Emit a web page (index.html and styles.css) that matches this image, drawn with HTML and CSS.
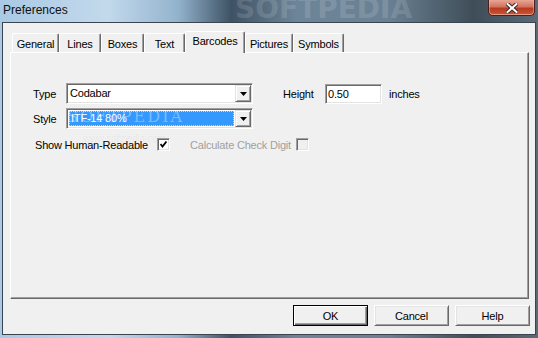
FILE: index.html
```html
<!DOCTYPE html>
<html lang="en">

<head>
    <meta charset="UTF-8">
    <title>Preferences</title>
    <link rel="stylesheet" href="styles.css">
</head>

<body>
    <div class="titlebar">
        <span class="title">Preferences</span>
        <span class="watermark">SOFTPEDIA</span>
        <button class="close" aria-label="Close">
            <svg width="12" height="10" viewBox="0 0 12 10">
                <path d="M1.5 1 L10.5 9 M10.5 1 L1.5 9" stroke="#3a2a2a" stroke-width="4" stroke-linecap="square" />
                <path d="M1.5 1 L10.5 9 M10.5 1 L1.5 9" stroke="#fff" stroke-width="2" stroke-linecap="square" />
            </svg>
        </button>
    </div>

    <div class="window">
        <div class="tabs">
            <div class="tab" style="width:47px">General</div>
            <div class="tab" style="width:42px">Lines</div>
            <div class="tab" style="width:43px">Boxes</div>
            <div class="tab" style="width:41px">Text</div>
            <div class="tab active" style="width:60px">Barcodes</div>
            <div class="tab" style="width:48px">Pictures</div>
            <div class="tab" style="width:51px">Symbols</div>
        </div>

        <div class="panel">
            <div class="row">
                <span class="label">Type</span>
                <div class="combo">
                    <span class="value">Codabar</span>
                    <span class="drop">
                        <svg width="7" height="4" viewBox="0 0 7 4"><polygon points="0,0 7,0 3.5,4" fill="#000" /></svg>
                    </span>
                </div>
                <span class="label height-label">Height</span>
                <div class="input">0.50</div>
                <span class="unit">inches</span>
            </div>

            <div class="row">
                <span class="label">Style</span>
                <div class="combo">
                    <span class="value selected">ITF-14 80%</span>
                    <span class="drop">
                        <svg width="7" height="4" viewBox="0 0 7 4"><polygon points="0,0 7,0 3.5,4" fill="#000" /></svg>
                    </span>
                </div>
            </div>

            <div class="check-row">
                <span class="check-label">Show Human-Readable</span>
                <span class="checkbox">
                    <svg width="7" height="7" viewBox="0 0 7 7"><polyline points="0.5,3 2.5,5.5 6.5,0.5" fill="none" stroke="#000" stroke-width="1.8" /></svg>
                </span>
                <span class="check-label disabled">Calculate Check Digit</span>
                <span class="checkbox off"></span>
            </div>

            <span class="mark">SOFTPEDIA</span>
            <span class="mark-url">www.softpedia.com</span>
        </div>

        <div class="actions">
            <button class="btn default">OK</button>
            <button class="btn">Cancel</button>
            <button class="btn">Help</button>
        </div>
    </div>
</body>

</html>
```

FILE: styles.css
```css
body {
    margin: 0;
    width: 538px;
    height: 338px;
    overflow: hidden;
    font-family: "Liberation Sans", Arial, sans-serif;
    font-size: 11px;
    letter-spacing: -0.2px;
    color: #000;
    background: linear-gradient(90deg, #a9c9e4 0%, #c3d9ec 20%, #93b3cd 33%, #3e5264 43%, #6d8598 55%, #6a8194 72%, #3f4d58 88%, #5a6a76 100%);
}

.titlebar {
    position: relative;
    height: 22px;
    display: flex;
    align-items: flex-start;
    padding-left: 3px;
}

.title {
    font-size: 12px;
    line-height: 14px;
    letter-spacing: 0;
    margin-top: 3px;
    color: #111;
}

/* site watermark over the glass frame */
.watermark {
    position: absolute;
    left: 235px;
    top: -8px;
    font-family: "DejaVu Sans", sans-serif;
    font-weight: bold;
    font-size: 28px;
    letter-spacing: 0;
    color: rgba(255, 255, 255, 0.14);
}

.close {
    margin-left: auto;
    margin-right: 3px;
    width: 47px;
    height: 16px;
    padding: 0;
    display: flex;
    align-items: center;
    justify-content: center;
    border: 1px solid #4a2019;
    border-top: none;
    border-radius: 0 0 5px 5px;
    background: linear-gradient(#e8a595 0%, #d2745f 45%, #b83a20 55%, #c9553a 100%);
    box-shadow: inset 0 -1px 0 rgba(255, 200, 180, 0.6), inset 1px 0 rgba(255, 200, 180, 0.4), inset -1px 0 rgba(255, 200, 180, 0.4);
}

.window {
    box-sizing: border-box;
    margin: 0 2px;
    height: 313px;
    border: 1px solid #3a4550;
    background-color: #f0f0f0;
    display: flex;
    flex-direction: column;
    padding: 8px 6px 0 7px;
}

.tabs {
    display: flex;
    align-items: flex-end;
    height: 21px;
    margin-left: 2px;
}

.tab {
    box-sizing: border-box;
    height: 19px;
    padding-top: 4px;
    line-height: 13px;
    text-align: center;
    background-color: #f0f0f0;
    border-top: 1px solid #fff;
    border-left: 1px solid #fff;
    border-right: 1px solid #696969;
    border-radius: 2px 2px 0 0;
    box-shadow: inset -1px 0 #a0a0a0;
}

.tab.active {
    position: relative;
    z-index: 1;
    height: 22px;
    margin-bottom: -1px;
    padding-top: 3px;
}

.panel {
    position: relative;
    box-sizing: border-box;
    height: 247px;
    border: 1px solid;
    border-color: #fff #696969 #696969 #fff;
    box-shadow: inset -1px -1px #a0a0a0;
    padding: 30px 0 0 22px;
}

.row {
    display: flex;
    align-items: center;
    height: 21px;
}

.row + .row {
    margin-top: 4px;
}

.label {
    width: 33px;
}

.height-label {
    margin-left: 30px;
    width: 42px;
}

.combo {
    box-sizing: border-box;
    width: 187px;
    height: 21px;
    display: flex;
    border: 1px solid;
    border-color: #a0a0a0 #fff #fff #a0a0a0;
    box-shadow: inset 1px 1px #696969, inset -1px -1px #e3e3e3;
    background-color: #fff;
    padding: 1px;
}

.value {
    flex: 1;
    padding-left: 2px;
    line-height: 17px;
}

.value.selected {
    margin: 1px;
    padding-left: 1px;
    line-height: 13px;
    background-color: #3399ff;
    color: #fff;
    border: 1px dotted #f2d67a;
}

.drop {
    box-sizing: border-box;
    width: 16px;
    height: 17px;
    display: flex;
    align-items: center;
    justify-content: center;
    background-color: #f0f0f0;
    border: 1px solid;
    border-color: #e3e3e3 #696969 #696969 #e3e3e3;
    box-shadow: inset 1px 1px #fff, inset -1px -1px #a0a0a0;
}

.input {
    box-sizing: border-box;
    width: 57px;
    height: 20px;
    padding: 2px 0 0 2px;
    line-height: 14px;
    background-color: #fff;
    border: 1px solid;
    border-color: #a0a0a0 #fff #fff #a0a0a0;
    box-shadow: inset 1px 1px #696969, inset -1px -1px #e3e3e3;
}

.unit {
    margin-left: 7px;
}

.check-row {
    display: flex;
    align-items: center;
    height: 13px;
    margin-top: 9px;
    padding-left: 2px;
}

.check-label {
    width: 122px;
}

.check-label.disabled {
    width: 106px;
    margin-left: 20px;
    color: #a0a0a0;
}

.checkbox {
    box-sizing: border-box;
    width: 13px;
    height: 13px;
    display: flex;
    align-items: center;
    justify-content: center;
    background-color: #fff;
    border: 1px solid;
    border-color: #a0a0a0 #fff #fff #a0a0a0;
    box-shadow: inset 1px 1px #696969, inset -1px -1px #e3e3e3;
}

.checkbox.off {
    background-color: #f0f0f0;
}

/* faint site watermark over the style box */
.mark {
    position: absolute;
    left: 56px;
    top: 54px;
    font-family: "DejaVu Serif", serif;
    font-size: 16px;
    letter-spacing: 2px;
    color: rgba(255, 255, 255, 0.35);
}

.mark-url {
    position: absolute;
    left: 72px;
    top: 80px;
    font-size: 10px;
    color: rgba(0, 0, 0, 0.05);
}

.actions {
    display: flex;
    justify-content: flex-end;
    gap: 6px;
    margin-top: 6px;
    margin-right: -1px;
}

.btn {
    box-sizing: border-box;
    width: 75px;
    height: 21px;
    padding: 0;
    font-family: "Liberation Sans", Arial, sans-serif;
    font-size: 11px;
    letter-spacing: -0.2px;
    color: #000;
    background-color: #f0f0f0;
    border: 1px solid;
    border-color: #fff #696969 #696969 #fff;
    box-shadow: inset 1px 1px #e3e3e3, inset -1px -1px #a0a0a0;
}

.btn.default {
    border-color: #000;
    box-shadow: inset 1px 1px #fff, inset -1px -1px #696969, inset -2px -2px #a0a0a0;
}
```
